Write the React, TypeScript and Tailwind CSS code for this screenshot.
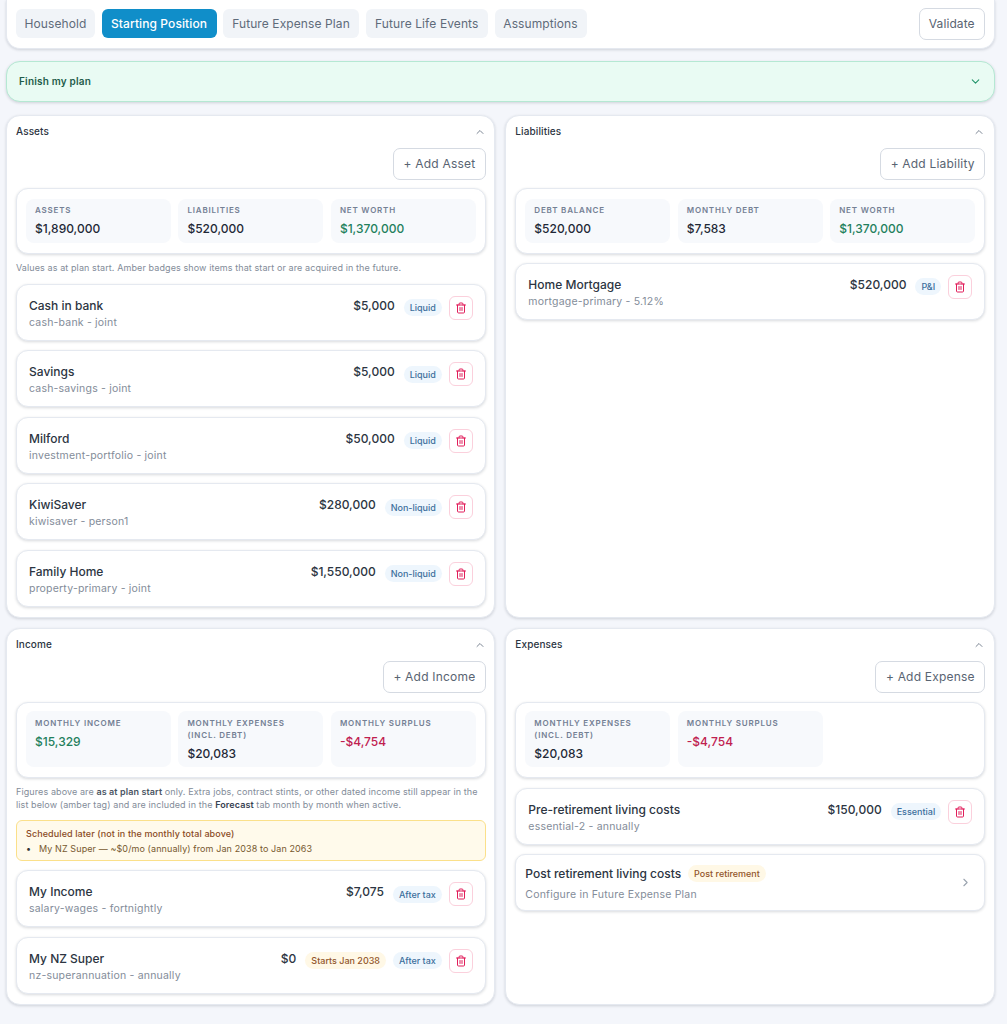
import { ChevronDown, ChevronRight, ChevronUp, Trash2 } from "lucide-react";
import { ReactNode } from "react";

const font = "font-['Inter','Liberation_Sans',sans-serif]";

type Stat = { label: string; value: string; tone?: "green" | "red" };
type Item = { name: string; sub: string; amount: string; badge: string; later?: string };

const cardShadow = "shadow-[0_1px_3px_rgba(15,23,42,0.16)]";

function Badge({ children, amber }: { children: ReactNode; amber?: boolean }) {
    return (
        <span
            className={
                "rounded-full px-[6px] py-[3px] text-[9px] leading-[11px] font-medium whitespace-nowrap " +
                (amber ? "bg-[#fff8e6] text-[#92562a]" : "bg-[#eef6fd] text-[#3c6f9c]")
            }
        >
            {children}
        </span>
    );
}

// tall = the income/expenses boxes, where one label wraps to two lines
function Stats({ stats, tall }: { stats: Stat[]; tall?: boolean }) {
    return (
        <div className={"rounded-[12px] border border-[#e5e9f0] bg-white px-[9px] pb-[10px] " + (tall ? "pt-[8px] " : "pt-[10px] ") + cardShadow}>
            <div className="grid grid-cols-3 gap-[7.5px]">
                {stats.map((s) => (
                    <div key={s.label} className={"rounded-[8px] bg-[#f7f9fc] px-[9px] " + (tall ? "pt-[6px] pb-[4px]" : "pt-[4.5px] pb-[5.5px]")}>
                        <div className="text-[8px] leading-[12px] font-semibold tracking-[0.1em] whitespace-pre-line text-[#748094] uppercase">
                            {s.label}
                        </div>
                        <div
                            className={
                                "mt-[4px] text-[12px] leading-[18px] font-medium " +
                                (s.tone === "green"
                                    ? "text-[#23805c]"
                                    : s.tone === "red"
                                      ? "text-[#c0204f]"
                                      : "text-[#1f2937]")
                            }
                        >
                            {s.value}
                        </div>
                    </div>
                ))}
            </div>
        </div>
    );
}

function Row({ item }: { item: Item }) {
    return (
        <div className={"flex h-[57px] items-start rounded-[12px] border border-[#e5e9f0] bg-white pt-[11px] pr-[12px] pl-[12px] " + cardShadow}>
            <div className="min-w-0 flex-1 pt-[1px]">
                <div className="text-[12px] leading-[17px] font-medium text-[#2c3542]">{item.name}</div>
                <div className="mt-[1px] text-[10.5px] leading-[15px] tracking-[0.2px] text-[#838c99]">{item.sub}</div>
            </div>
            <div className="pt-[1px] text-[12px] leading-[17px] font-medium text-[#2c3542]">{item.amount}</div>
            <div className="ml-[9px] flex items-center gap-[7px]">
                {item.later && <Badge amber>{item.later}</Badge>}
                <Badge>{item.badge}</Badge>
                <button className="flex h-[24px] w-[24px] items-center justify-center rounded-[6px] border border-[#fbd0dc] bg-white text-[#e11d5a]">
                    <Trash2 size={12} strokeWidth={2} />
                </button>
            </div>
        </div>
    );
}

function Panel({ title, action, children, lower }: { title: string; action: string; children: ReactNode; lower?: boolean }) {
    return (
        <section className={"flex flex-col rounded-[14px] border border-[#e5e9f0] bg-white pt-[8px] pr-[8.5px] pb-[10px] pl-[9px] " + cardShadow}>
            <div className="flex h-[15px] items-center justify-between">
                <h2 className="text-[10px] font-medium tracking-[0.1px] text-[#2c3542]">{title}</h2>
                <ChevronUp size={12} className="text-[#7c8694]" />
            </div>
            <div className="mt-[9px] flex justify-end">
                <button className="h-[32px] rounded-[7px] border border-[#d5dae2] bg-white px-[9.5px] text-[12px] tracking-[0.2px] text-[#596472]">
                    + {action}
                </button>
            </div>
            <div className={"flex flex-col " + (lower ? "mt-[9px]" : "mt-[8px]")}>{children}</div>
        </section>
    );
}

const assets: Item[] = [
    { name: "Cash in bank", sub: "cash-bank - joint", amount: "$5,000", badge: "Liquid" },
    { name: "Savings", sub: "cash-savings - joint", amount: "$5,000", badge: "Liquid" },
    { name: "Milford", sub: "investment-portfolio - joint", amount: "$50,000", badge: "Liquid" },
    { name: "KiwiSaver", sub: "kiwisaver - person1", amount: "$280,000", badge: "Non-liquid" },
    { name: "Family Home", sub: "property-primary - joint", amount: "$1,550,000", badge: "Non-liquid" },
];

const tabs = [
    { label: "Household", width: "w-[79px]" },
    { label: "Starting Position", width: "w-[115px]" },
    { label: "Future Expense Plan", width: "w-[136px]" },
    { label: "Future Life Events", width: "w-[122.5px]" },
    { label: "Assumptions", width: "w-[92px]" },
];

export default function App() {
    return (
        <div className={"min-h-screen bg-[#f4f6fb] pr-[12.3px] pl-[6px] " + font}>
            <div className={"flex h-[49px] items-start justify-between rounded-b-[14px] border-x border-b border-[#e5e9f0] bg-white pt-[9px] pr-[9px] pl-[9px] " + cardShadow}>
                <div className="flex gap-[6.5px]">
                    {tabs.map((t) => (
                        <button
                            key={t.label}
                            className={
                                "h-[29px] rounded-[6px] text-[12px] tracking-[0.1px] whitespace-nowrap " +
                                t.width +
                                (t.label === "Starting Position"
                                    ? " bg-[#108ec9] font-medium text-white"
                                    : " bg-[#f1f4f8] text-[#5f6b7a]")
                            }
                        >
                            {t.label}
                        </button>
                    ))}
                </div>
                <button className="-mt-[1px] h-[32px] rounded-[7px] border border-[#d5dae2] bg-white px-[9px] text-[12px] tracking-[0.1px] text-[#596472]">
                    Validate
                </button>
            </div>

            <div className={"mt-[12px] flex h-[41px] items-center justify-between rounded-[14px] border border-[#b5e8d3] bg-[#e9fbf3] pr-[12px] pl-[12px] " + cardShadow}>
                <span className="text-[10px] font-semibold tracking-[0.2px] text-[#1f5c4a]">Finish my plan</span>
                <ChevronDown size={13} className="text-[#23946b]" />
            </div>

            <div className="mt-[13px] grid grid-cols-2 gap-x-[10px] gap-y-[10.5px]">
                <Panel title="Assets" action="Add Asset">
                    <Stats
                        stats={[
                            { label: "Assets", value: "$1,890,000" },
                            { label: "Liabilities", value: "$520,000" },
                            { label: "Net worth", value: "$1,370,000", tone: "green" },
                        ]}
                    />
                    <p className="mt-[8px] mb-[9px] text-[9px] leading-[12.5px] tracking-[0.1px] text-[#838c99]">
                        Values as at plan start. Amber badges show items that start or are acquired in the future.
                    </p>
                    <div className="flex flex-col gap-[9.5px]">
                        {assets.map((a) => (
                            <Row key={a.name} item={a} />
                        ))}
                    </div>
                </Panel>

                <Panel title="Liabilities" action="Add Liability">
                    <Stats
                        stats={[
                            { label: "Debt balance", value: "$520,000" },
                            { label: "Monthly debt", value: "$7,583" },
                            { label: "Net worth", value: "$1,370,000", tone: "green" },
                        ]}
                    />
                    <div className="mt-[8.5px]">
                        <Row item={{ name: "Home Mortgage", sub: "mortgage-primary - 5.12%", amount: "$520,000", badge: "P&I" }} />
                    </div>
                </Panel>

                <Panel title="Income" action="Add Income" lower>
                    <Stats
                        tall
                        stats={[
                            { label: "Monthly income", value: "$15,329", tone: "green" },
                            { label: "Monthly expenses\n(incl. debt)", value: "$20,083" },
                            { label: "Monthly surplus", value: "-$4,754", tone: "red" },
                        ]}
                    />
                    <p className="mt-[8px] text-[9px] leading-[12.5px] tracking-[0.1px] text-[#838c99]">
                        Figures above are <b className="font-semibold text-[#4b5563]">as at plan start</b> only. Extra jobs, contract stints, or other dated income still appear in the list below (amber tag) and are included in the <b className="font-semibold text-[#374151]">Forecast</b> tab month by month when active.
                    </p>
                    <div className="mt-[8.5px] h-[41px] rounded-[6px] border border-[#fbe08a] bg-[#fffaeb] px-[9px] py-[5px] text-[9px] leading-[15px] tracking-[0.1px]">
                        <div className="font-medium text-[#8a4b1f]">Scheduled later (not in the monthly total above)</div>
                        <div className="flex text-[#78592f]">
                            <span className="w-[13px] text-[#333]">•</span>
                            <span>My NZ Super — ~$0/mo (annually) from Jan 2038 to Jan 2063</span>
                        </div>
                    </div>
                    <div className="mt-[9.5px] flex flex-col gap-[9.5px]">
                        <Row item={{ name: "My Income", sub: "salary-wages - fortnightly", amount: "$7,075", badge: "After tax" }} />
                        <Row item={{ name: "My NZ Super", sub: "nz-superannuation - annually", amount: "$0", badge: "After tax", later: "Starts Jan 2038" }} />
                    </div>
                </Panel>

                <Panel title="Expenses" action="Add Expense" lower>
                    <Stats
                        tall
                        stats={[
                            { label: "Monthly expenses\n(incl. debt)", value: "$20,083" },
                            { label: "Monthly surplus", value: "-$4,754", tone: "red" },
                        ]}
                    />
                    <div className="mt-[9.5px] flex flex-col gap-[9.5px]">
                        <Row item={{ name: "Pre-retirement living costs", sub: "essential-2 - annually", amount: "$150,000", badge: "Essential" }} />
                        <div className={"flex h-[57px] items-center justify-between rounded-[10px] border border-[#e5e9f0] bg-white pr-[12px] pl-[9px] " + cardShadow}>
                            <div className="pt-[2px]">
                                <div className="flex items-center gap-[7px]">
                                    <span className="text-[12px] leading-[17px] font-medium text-[#2c3542]">Post retirement living costs</span>
                                    <Badge amber>Post retirement</Badge>
                                </div>
                                <div className="mt-[5px] text-[10.5px] leading-[15px] tracking-[0.2px] text-[#838c99]">Configure in Future Expense Plan</div>
                            </div>
                            <ChevronRight size={13} className="text-[#9aa3af]" />
                        </div>
                    </div>
                </Panel>
            </div>
        </div>
    );
}
